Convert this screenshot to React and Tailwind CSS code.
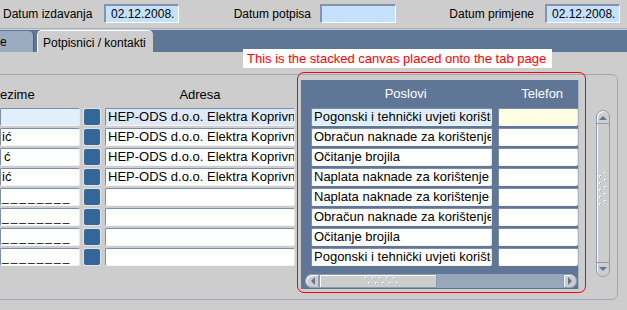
import React from 'react';

const font = { fontFamily: '"Liberation Sans", Arial, sans-serif' };

// Polja iz forme
const names = ['', 'ić', 'ć', 'ić', null, null, null, null];
const addresses = [
  'HEP-ODS d.o.o. Elektra Koprivnica',
  'HEP-ODS d.o.o. Elektra Koprivnica',
  'HEP-ODS d.o.o. Elektra Koprivnica',
  'HEP-ODS d.o.o. Elektra Koprivnica',
  '', '', '', '',
];
const poslovi = [
  'Pogonski i tehnički uvjeti korištenja mreže',
  'Obračun naknade za korištenje mreže',
  'Očitanje brojila',
  'Naplata naknade za korištenje mreže',
  'Naplata naknade za korištenje mreže',
  'Obračun naknade za korištenje mreže',
  'Očitanje brojila',
  'Pogonski i tehnički uvjeti korištenja mreže',
];

const Field = ({ className = '', children }) => (
  <div
    className={`h-[18px] leading-[16px] overflow-hidden whitespace-nowrap text-[13px] text-black border-t border-l border-[#7d8fa7] border-r-[#e9e9e9] border-b-[#f4f4f4] border-r border-b rounded-[2px] ${className}`}
  >
    {children}
  </div>
);

const DateField = ({ value, w }) => (
  <div
    className={`${w} h-[19px] leading-[17px] bg-[#c6e1fb] border-t-2 border-l-2 border-[#8494ab] border-r border-b border-r-white border-b-white pl-[5px] text-[12px] text-black`}
  >
    {value}
  </div>
);

const Grip = ({ vertical }) =>
  vertical ? (
    <svg width="10" height="34" viewBox="0 0 10 34">
      {[0, 1, 2, 3, 4].map((i) => (
        <g key={i}>
          <rect x="1" y={i * 7 + 3} width="2" height="2" fill="#ffffff" />
          <rect x="2" y={i * 7 + 4} width="1" height="1" fill="#8e9db1" />
          <rect x="6" y={i * 7} width="2" height="2" fill="#ffffff" />
          <rect x="7" y={i * 7 + 1} width="1" height="1" fill="#8e9db1" />
        </g>
      ))}
    </svg>
  ) : (
    <svg width="34" height="10" viewBox="0 0 34 10">
      {[0, 1, 2, 3, 4].map((i) => (
        <g key={i}>
          <rect x={i * 7} y="1" width="2" height="2" fill="#ffffff" />
          <rect x={i * 7 + 1} y="2" width="1" height="1" fill="#8e9db1" />
          <rect x={i * 7 + 3} y="6" width="2" height="2" fill="#ffffff" />
          <rect x={i * 7 + 4} y="7" width="1" height="1" fill="#8e9db1" />
        </g>
      ))}
    </svg>
  );

const Arrow = ({ dir }) => {
  const pts = {
    up: '0,5 4,1 8,5',
    down: '0,1 8,1 4,5',
    left: '5,0 5,8 1,4',
    right: '1,0 1,8 5,4',
  }[dir];
  const vert = dir === 'up' || dir === 'down';
  return (
    <svg width={vert ? 8 : 6} height={vert ? 6 : 8} viewBox={vert ? '0 0 8 6' : '0 0 6 8'}>
      <polygon points={pts} fill="#5f7696" />
    </svg>
  );
};

const VScroll = () => (
  <div className="w-[14px] h-[167px] mt-[35px] ml-[17px] rounded-[7px] border border-[#8e9db1] bg-[#cdcdcd] shadow-[inset_1px_1px_0_#ffffff] flex flex-col overflow-hidden">
    <div className="h-[13px] flex items-center justify-center border-b border-[#8e9db1] pt-[1px]">
      <Arrow dir="up" />
    </div>
    <div className="flex-1 flex justify-center pt-[48px]">
      <Grip vertical />
    </div>
    <div className="h-[14px] flex items-center justify-center border-t border-[#8e9db1] pb-[1px]">
      <Arrow dir="down" />
    </div>
  </div>
);

const HScroll = () => (
  <div className="ml-[4px] mt-[8px] w-[272px] h-[14px] rounded-[7px] bg-[#98a7bb] flex overflow-hidden">
    <div className="w-[14px] h-full bg-[#cdcdcd] rounded-l-[7px] border border-[#8e9db1] shadow-[inset_1px_1px_0_#ffffff] flex items-center justify-center pl-[2px]">
      <Arrow dir="left" />
    </div>
    <div className="w-[118px] h-full bg-[#cdcdcd] border border-[#8e9db1] shadow-[inset_1px_1px_0_#ffffff] flex items-center justify-center pl-[8px]">
      <Grip />
    </div>
    <div className="flex-1" />
    <div className="w-[14px] h-full bg-[#cdcdcd] rounded-r-[7px] border border-[#8e9db1] shadow-[inset_1px_1px_0_#ffffff] flex items-center justify-center pr-[1px]">
      <Arrow dir="right" />
    </div>
  </div>
);

export default function App() {
  return (
    <div className="w-[627px] h-[310px] bg-[#cdcdcd] relative overflow-hidden text-[12px] text-black" style={font}>
      {/* Gornji red s datumima */}
      <div className="h-[29px] flex items-center border-b border-[#a3b0c1] pb-[1px]">
        <div className="w-[104px] pl-[3px] whitespace-nowrap">Datum izdavanja</div>
        <DateField value="02.12.2008." w="w-[75px]" />
        <div className="w-[141px] text-right pr-[9px] whitespace-nowrap">Datum potpisa</div>
        <DateField value="" w="w-[76px]" />
        <div className="w-[149px] text-right pr-[11px] whitespace-nowrap">Datum primjene</div>
        <DateField value="02.12.2008." w="w-[75px]" />
      </div>

      {/* Tabovi */}
      <div className="mt-[1px] h-[22px] bg-[#5f7696] flex items-end">
        <div className="w-[34px] h-[21px] bg-[#9babbf] rounded-tr-[5px] border-r border-[#4d6384] flex items-center">
          e
        </div>
        <div className="ml-[3px] w-[116px] h-[22px] bg-[#cdcdcd] rounded-t-[5px] border-t border-l border-white pl-[5px] pt-[2px] flex items-center">
          Potpisnici / kontakti
        </div>
      </div>

      {/* Okvir stranice */}
      <div className="-ml-[8px] mt-[22px] w-[626px] h-[226px] border border-[#9dabbe] rounded-[6px] flex items-start">
        <div className="pl-[7px] w-[308px] pt-[13px]">
          <div className="h-[14px] leading-[14px] flex text-[13px]">
            <div className="w-[80px]">ezime</div>
            <div className="ml-[4px] w-[16px]" />
            <div className="ml-[5px] w-[190px] text-center">Adresa</div>
          </div>
          <div className="mt-[6px] flex flex-col gap-[2px]">
            {addresses.map((a, i) => (
              <div key={i} className="flex">
                <Field className={`w-[80px] ${i === 0 ? 'bg-[#e1eefb]' : 'bg-white'} ${names[i] === 'ć' ? 'pl-[3px]' : 'pl-[1px]'}`}>
                  {names[i] === null ? (
                    <span className="text-[12px] tracking-[2px] text-[#222]">________</span>
                  ) : (
                    names[i]
                  )}
                </Field>
                <div className="ml-[4px] mt-[1px] w-[16px] h-[16px] rounded-[2px] bg-[#336699] shadow-[0_0_0_1px_#e4e4e4]" />
                <Field className={`ml-[5px] w-[190px] pl-[2px] ${i === 0 ? 'bg-[#dde9f6]' : 'bg-white'}`}>{a}</Field>
              </div>
            ))}
          </div>
        </div>

        {/* Stacked canvas */}
        <div className="mt-[5px] w-[278px] h-[209px] bg-[#5f7696] overflow-hidden border-r border-[#a9b5c4]">
          <div className="h-[28px] pb-[1px] flex items-center text-white text-[13px]">
            <div className="ml-[10px] w-[190px] text-center">Poslovi</div>
            <div className="ml-[6px] w-[72px] text-center">Telefon</div>
          </div>
          <div className="flex flex-col gap-[2px]">
            {poslovi.map((p, i) => (
              <div key={i} className="flex">
                <Field className={`ml-[10px] w-[190px] pl-[2px] ${i === 0 ? 'bg-[#e1eefb]' : 'bg-white'}`}>{p}</Field>
                <Field className={`ml-[6px] w-[80px] shrink-0 ${i === 0 ? 'bg-[#fffde2]' : 'bg-white'}`} />
              </div>
            ))}
          </div>
          <HScroll />
        </div>

        <VScroll />
      </div>

      {/* Napomena */}
      <div className="absolute left-[243px] top-[49px] w-[309px] h-[19px] bg-white text-[#ff0000] text-[13px] pl-[4px] leading-[19px] whitespace-nowrap">
        This is the stacked canvas placed onto the tab page
      </div>
      <div className="absolute left-[297px] top-[72px] w-[289px] h-[221px] border border-[#ff0000] rounded-[7px]" />
    </div>
  );
}
